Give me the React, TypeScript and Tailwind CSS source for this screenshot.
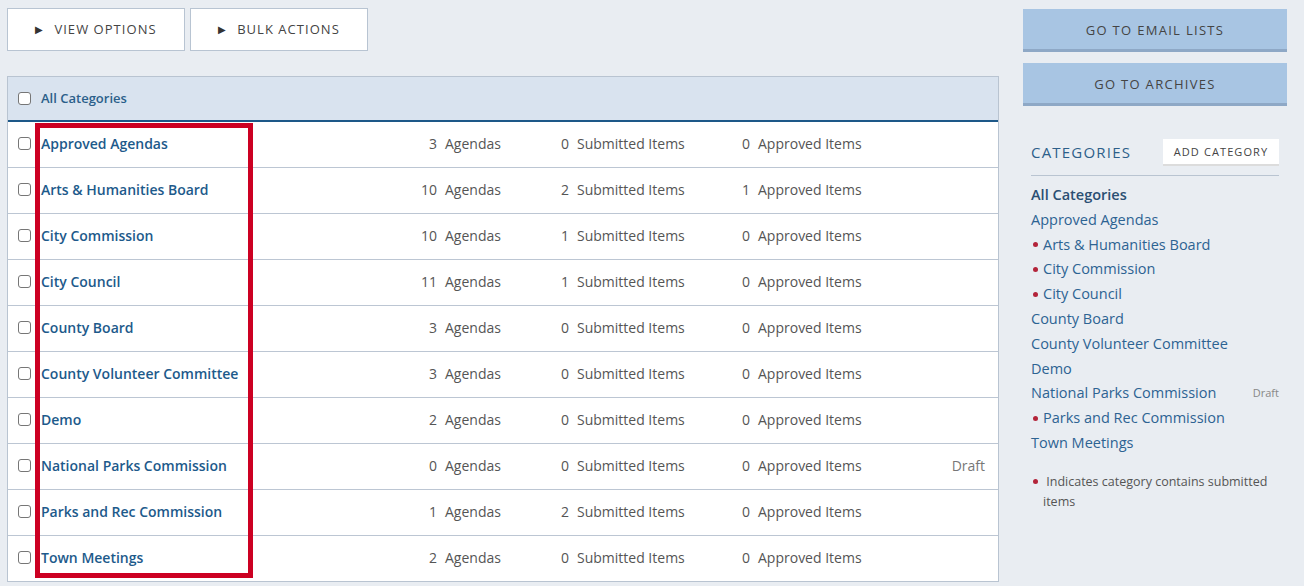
import React from "react";

const rows = [
  { name: "Approved Agendas", a: 3, s: 0, p: 0 },
  { name: "Arts & Humanities Board", a: 10, s: 2, p: 1 },
  { name: "City Commission", a: 10, s: 1, p: 0 },
  { name: "City Council", a: 11, s: 1, p: 0 },
  { name: "County Board", a: 3, s: 0, p: 0 },
  { name: "County Volunteer Committee", a: 3, s: 0, p: 0 },
  { name: "Demo", a: 2, s: 0, p: 0 },
  { name: "National Parks Commission", a: 0, s: 0, p: 0, draft: true },
  { name: "Parks and Rec Commission", a: 1, s: 2, p: 0 },
  { name: "Town Meetings", a: 2, s: 0, p: 0 },
];

const side = [
  { name: "Approved Agendas" },
  { name: "Arts & Humanities Board", dot: true },
  { name: "City Commission", dot: true },
  { name: "City Council", dot: true },
  { name: "County Board" },
  { name: "County Volunteer Committee" },
  { name: "Demo" },
  { name: "National Parks Commission", draft: true },
  { name: "Parks and Rec Commission", dot: true },
  { name: "Town Meetings" },
];

function Box() {
  return <span className="block w-[13px] h-[13px] border border-[#767676] rounded-[3px] bg-white shrink-0" />;
}

function Dot() {
  return <span className="block w-[5px] h-[5px] rounded-full bg-[#b3243a] shrink-0" />;
}

export default function App() {
  return (
    <div
      className="w-full h-[586px] bg-[#e9edf2] flex overflow-hidden"
      style={{ fontFamily: '"Open Sans", "Liberation Sans", sans-serif' }}
    >
      <div className="ml-[7px] w-[992px] pt-[8px]">
        <div className="flex gap-[5px]">
          {["VIEW OPTIONS", "BULK ACTIONS"].map((t) => (
            <div
              key={t}
              className="w-[178px] h-[43px] bg-white border border-[#b8c4d2] flex items-center justify-center gap-[10px] text-[13px] tracking-[0.08em] text-[#444]"
            >
              <span className="text-[10px] text-[#333]">▶</span>
              <span>{t}</span>
            </div>
          ))}
        </div>
        <div className="relative mt-[25px] bg-white border border-[#b9c4d1]">
          <div className="h-[45px] bg-[#d9e3ef] border-b-2 border-[#1d5888] flex items-center pl-[10px] gap-[10px]">
            <Box />
            <span className="text-[13px] font-semibold text-[#2b5f8a]">All Categories</span>
          </div>
          {rows.map((r, i) => (
            <div
              key={r.name}
              className={`flex items-center pl-[10px] pr-[13px] pb-[2px] text-[14px] text-[#555] ${i < rows.length - 1 ? "h-[46px] border-b border-[#bcc6d3]" : "h-[45px]"}`}
            >
              <Box />
              <span className="ml-[10px] w-[359px] font-semibold text-[#1d5a8b]">{r.name}</span>
              <span className="w-[37px] text-right">{r.a}</span>
              <span className="ml-[8px] w-[85px]">Agendas</span>
              <span className="w-[39px] text-right">{r.s}</span>
              <span className="ml-[8px] w-[134px]">Submitted Items</span>
              <span className="w-[39px] text-right">{r.p}</span>
              <span className="ml-[8px]">Approved Items</span>
              <span className="ml-auto text-[#777]">{r.draft ? "Draft" : ""}</span>
            </div>
          ))}
          <div className="absolute left-[27px] top-[46px] w-[218px] h-[455px] border-[5px] border-[#cc0022] pointer-events-none" />
        </div>
      </div>

      <div className="ml-[24px] w-[264px] pt-[9px]">
        {["GO TO EMAIL LISTS", "GO TO ARCHIVES"].map((t, i) => (
          <div
            key={t}
            className={`h-[43px] pt-[3px] bg-[#a8c5e3] border-b-[3px] border-[#8ea8c6] flex items-center justify-center text-[13px] tracking-[0.1em] text-[#444] ${i ? "mt-[11px]" : ""}`}
          >
            {t}
          </div>
        ))}
        <div className="px-[8px] mt-[33px]">
          <div className="flex items-center justify-between h-[27px]">
            <span className="text-[15px] tracking-[0.08em] text-[#2d5f8a]">CATEGORIES</span>
            <span className="h-[27px] w-[116px] pt-[2px] bg-white border-b-2 border-[#dcdcdc] flex items-center justify-center text-[11px] tracking-[0.1em] text-[#444]">
              ADD CATEGORY
            </span>
          </div>
          <div className="mt-[9px] border-t border-[#b9c4d1]" />
          <div className="mt-[7px] text-[14.5px] leading-[24.8px]">
            <div className="font-semibold text-[#2b4f73]">All Categories</div>
            {side.map((s) => (
              <div key={s.name} className="flex items-center text-[#2d6392]">
                {s.dot && (
                  <span className="w-[12px] flex items-center pl-[2px]">
                    <Dot />
                  </span>
                )}
                <span>{s.name}</span>
                {s.draft && <span className="ml-auto text-[11px] text-[#888]">Draft</span>}
              </div>
            ))}
          </div>
          <div className="mt-[16px] flex text-[12.5px] leading-[20px] text-[#555]">
            <span className="w-[12px] pl-[2px] h-[20px] flex items-center shrink-0">
              <Dot />
            </span>
            <span>&nbsp;Indicates category contains submitted items</span>
          </div>
        </div>
      </div>
    </div>
  );
}
